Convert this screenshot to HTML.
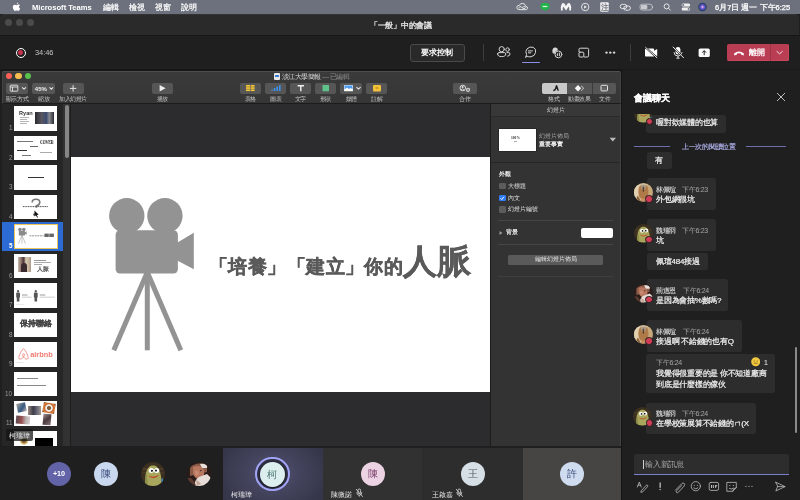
<!DOCTYPE html>
<html><head><meta charset="utf-8">
<style>
*{margin:0;padding:0;box-sizing:border-box}
html,body{width:800px;height:500px;overflow:hidden;background:#1f1f1f;font-family:"Liberation Sans",sans-serif;color:#fff}
body{-webkit-font-smoothing:antialiased}
.t{will-change:transform}
.a{position:absolute}
.t{position:absolute;white-space:nowrap;line-height:1}
.av{border-radius:50%;display:flex;align-items:center;justify-content:center;line-height:1;will-change:transform}
.kb{top:83px;height:10.5px;background:#565656;border-radius:2px}
.kl{position:absolute;top:97px;font-size:5.6px;letter-spacing:-0.45px;line-height:1;color:#c2c2c2;white-space:nowrap;transform:translateX(-50%)}
</style></head><body>
<svg width="0" height="0" style="position:absolute">
<defs>
<clipPath id="cc"><circle cx="12" cy="12" r="12"/></clipPath>
<symbol id="frog" viewBox="0 0 24 24"><g clip-path="url(#cc)">
<rect width="24" height="24" fill="#3b3020"/>
<path d="M2 6 L22 6 L22 8 L2 8Z M2 10 L22 10 L22 11 L2 11Z" fill="#4a3c28"/>
<path d="M4.5 24 C3.5 17 4.5 8 8 5 C10 3.2 14 3 16 5 C19.5 8 21 17 20.5 24Z" fill="#a8a65c"/>
<path d="M4.5 24 C4 19 4.6 14 5.5 12 L7 24Z" fill="#8c8c48"/>
<ellipse cx="10.3" cy="8.6" rx="2.6" ry="2.5" fill="#fff"/>
<ellipse cx="15.6" cy="8.4" rx="2.6" ry="2.5" fill="#fff"/>
<circle cx="10.9" cy="8.8" r="1.1" fill="#222"/>
<circle cx="15" cy="8.6" r="1.1" fill="#222"/>
<path d="M7.2 13.4 Q12.5 16.6 17.8 12.8 Q17.2 15.2 12.4 16 Q8.4 15.6 7.2 13.4Z" fill="#c23a22"/>
<path d="M20 18 L22 16 L22 22Z" fill="#3a8ac8"/>
</g></symbol>
<symbol id="man" viewBox="0 0 24 24"><g clip-path="url(#cc)">
<rect width="24" height="24" fill="#2a1c18"/>
<path d="M3 6 C6 1 16 0 20 4 L20 10 L3 14Z" fill="#8a5a48"/>
<path d="M13 2 C17 1 21 3 20 6 L15 6Z" fill="#e8e0dc"/>
<path d="M6 5 C10 3 16 4 17 9 C18 14 15 17 12 17 C8 17 6 13 6 9Z" fill="#b87860"/>
<path d="M8 9 C10 8 12 9 12 11 C12 13 10 14 8 13Z" fill="#c88a70"/>
<circle cx="13.8" cy="8.6" r="0.8" fill="#3a2a2a"/>
<path d="M12 15 L20 12 L24 16 L24 24 L8 24 C7 20 9 17 12 15Z" fill="#e6dcd8"/>
<path d="M4 16 C6 18 8 20 9 24 L0 24 L0 16Z" fill="#5a3a30"/>
<path d="M9 18 C11 19 13 20 14 22 L10 24Z" fill="#c8a898"/>
</g></symbol>
<symbol id="dog" viewBox="0 0 24 24"><g clip-path="url(#cc)">
<rect width="24" height="24" fill="#d2bc98"/>
<path d="M0 6 C2 3 5 2 8 3 L6 24 H0Z" fill="#e0d0b0"/>
<path d="M24 6 C22 3 19 2 16 3 L18 24 H24Z" fill="#c8a878"/>
<path d="M7 4 C9 2 15 2 17 4 C19 8 19 14 17 18 C15 22 9 22 7 18 C5 14 5 8 7 4Z" fill="#b07a48"/>
<path d="M8.5 3 C10 2 14 2 15.5 3 L14.5 8 H9.5Z" fill="#a89a88"/>
<path d="M11 5 C11.6 4.6 12.4 4.6 13 5 L12.8 11 C12.5 11.8 11.5 11.8 11.2 11Z" fill="#5a4030"/>
<path d="M5 16 C7 20 9 24 9 24 H4 C3 20 3 18 5 16Z" fill="#8a6038"/>
<path d="M19 16 C17 20 15 24 15 24 H20 C21 20 21 18 19 16Z" fill="#9a7040"/>
<path d="M9 18 C10 21 14 21 15 18 L15 24 H9Z" fill="#c89060"/>
</g></symbol>
<symbol id="man2" viewBox="0 0 24 24"><g clip-path="url(#cc)">
<rect width="24" height="24" fill="#3a2018"/>
<path d="M2 4 C6 0 18 0 22 6 L22 12 C18 10 8 10 2 14Z" fill="#7a4a30"/>
<path d="M6 6 C10 4 16 5 17 10 C18 15 15 18 12 18 C8 18 6 14 6 10Z" fill="#c08a68"/>
<path d="M10 15 L22 14 L24 24 L6 24Z" fill="#e8dcd0"/>
<path d="M0 14 C4 16 6 20 6 24 H0Z" fill="#5a3020"/>
</g></symbol>
</defs></svg>
<!-- menu bar -->
<div class="a" style="left:0;top:0;width:800px;height:14px;background:#6c717d"></div>
<div class="t" style="left:32px;top:4.0px;font-size:7.6px;font-weight:bold">Microsoft Teams</div>
<div class="t" style="left:103px;top:3.8px;font-size:7.5px;letter-spacing:-0.3px;-webkit-text-stroke:0.2px #fff">編輯</div>
<div class="t" style="left:129px;top:3.8px;font-size:7.5px;letter-spacing:-0.3px;-webkit-text-stroke:0.2px #fff">檢視</div>
<div class="t" style="left:155px;top:3.8px;font-size:7.5px;letter-spacing:-0.3px;-webkit-text-stroke:0.2px #fff">視窗</div>
<div class="t" style="left:181px;top:3.8px;font-size:7.5px;letter-spacing:-0.3px;-webkit-text-stroke:0.2px #fff">說明</div>
<div class="t" style="left:715px;top:3.8px;font-size:7.5px;-webkit-text-stroke:0.25px #fff">6月7日 週一 下午6:25</div>

<svg class="a" style="left:0;top:0" width="800" height="14" viewBox="0 0 800 14">
 <g transform="translate(2.4 0)"><path d="M16.6 4.6 C15.4 4.6 15 5.2 14.3 5.2 C13.6 5.2 13 4.6 12.2 4.7 C11.2 4.8 10.4 5.7 10.4 7.1 C10.4 8.9 11.6 10.9 12.5 10.9 C13.1 10.9 13.4 10.5 14.2 10.5 C15 10.5 15.2 10.9 15.9 10.9 C16.7 10.9 17.5 9.5 17.8 8.6 C16.9 8.2 16.5 7.4 16.6 6.6 C16.7 5.9 17.1 5.4 17.6 5.2 C17.3 4.8 17 4.6 16.6 4.6Z M15.8 2.4 C15.9 3.1 15.4 4.1 14.3 4.2 C14.2 3.4 14.9 2.5 15.8 2.4Z" fill="#fff"/></g>
 <g stroke="#f0f0f0" stroke-width="0.9" fill="none">
  <path d="M519 9.6 Q516.6 9.4 516.8 7.2 Q517.2 5 519.4 5.4 Q520.2 3 522.8 3.4 Q525.4 3.8 525.6 6.2 Q527.8 6.6 527.6 8.2 Q527.2 9.8 525.6 9.7 Z"/>
  <path d="M519.6 8.4 Q518.4 7.2 519.8 6.6 Q521 6.4 522.6 8 Q524 9.2 525 8.4 Q525.8 7.4 524.6 6.6 Q523.4 6.2 522.4 7.6"/>
  <circle cx="585.2" cy="7" r="3.7"/>
  <rect x="620.2" y="4.4" width="6.6" height="4.2" rx="2.1"/><rect x="623.8" y="6" width="6.6" height="4.2" rx="2.1"/>
  <rect x="640" y="4.2" width="12.2" height="5.8" rx="2.2" stroke="#d8d8d8" stroke-width="0.7"/>
  <circle cx="666.6" cy="6.4" r="2.5"/>
  <path d="M668.4 8.2 L670.6 10.4"/>
 </g>
 <path d="M540.4 6.5 Q540.4 2.8 545 2.8 Q549.6 2.8 549.6 6.5 Q549.6 9.2 546.2 10 L545.2 11.4 L544.6 10.1 Q540.4 9.6 540.4 6.5Z" fill="#21b24b"/>
 <rect x="542.6" y="5.9" width="4.8" height="1.2" fill="#d8f5dd"/>
 <path d="M561 10.4 Q560.2 6.8 561.6 4.2 Q562.8 2.4 564.4 3.6 L566 6 L567.6 3.6 Q569.2 2.4 570.4 4.2 Q571.8 6.8 571 10.4 L569.2 10.6 Q569.6 8 568.8 6.6 L566 10.4 L563.2 6.6 Q562.4 8 562.8 10.6Z" fill="#f4f4f4"/>
 <path d="M584.2 5.2 L586.8 7 L584.2 8.8Z" fill="#f0f0f0"/>
 <rect x="600.2" y="2.2" width="8.6" height="9.6" rx="1.2" fill="#f2f2f2"/>
 <text x="600.9" y="10.3" font-size="7.6" fill="#6c717d" font-weight="bold">注</text>
 <rect x="640.9" y="5" width="6.4" height="4.2" rx="1.2" fill="#c8cacf"/>
 <path d="M652.6 6.2 V8" stroke="#d8d8d8" stroke-width="0.7"/>
 <g fill="#f0f0f0">
  <rect x="681.6" y="3.4" width="8.6" height="3" rx="1.5"/>
  <rect x="681.6" y="7.6" width="8.6" height="3" rx="1.5"/>
 </g>
 <circle cx="683.2" cy="4.9" r="1" fill="#6c717d"/><circle cx="688.6" cy="9.1" r="1" fill="#6c717d"/>
 <defs><radialGradient id="siri" cx="50%" cy="50%" r="50%"><stop offset="0" stop-color="#e8f0ff"/><stop offset="0.3" stop-color="#a060c8"/><stop offset="0.65" stop-color="#3a58b8"/><stop offset="1" stop-color="#2a2a48"/></radialGradient></defs>
 <circle cx="702.5" cy="7" r="4.2" fill="url(#siri)"/>
</svg>
<!-- teams title bar -->
<div class="a" style="left:0;top:14.4px;width:799.4px;height:20.6px;background:#2a2a2a;border-radius:5px 5px 0 0;box-shadow:inset 0 0.6px 0 #3c3c3c"></div>
<div class="a" style="left:4.5px;top:18.5px;width:7px;height:7px;border-radius:50%;background:#4b4b4b"></div>
<div class="a" style="left:15.7px;top:18.5px;width:7px;height:7px;border-radius:50%;background:#4b4b4b"></div>
<div class="a" style="left:26.9px;top:18.5px;width:7px;height:7px;border-radius:50%;background:#4b4b4b"></div>
<div class="t" style="left:369.8px;top:21.8px;font-size:7.5px;letter-spacing:-0.3px;color:#f0f0f0;-webkit-text-stroke:0.25px #f0f0f0">「一般」中的會議</div>

<!-- toolbar -->
<div class="a" style="left:0;top:35px;width:800px;height:35px;background:#1f1f1f;border-top:1px solid #161616"></div>
<div class="a" style="left:15.5px;top:47.5px;width:10px;height:10px;border-radius:50%;border:1.3px solid #fff;background:#1f1f1f"></div>
<div class="a" style="left:17.8px;top:49.8px;width:5.4px;height:5.4px;border-radius:50%;background:#c4314b"></div>
<div class="t" style="left:35px;top:48.5px;font-size:7.5px;color:#c4c4c4;letter-spacing:-0.1px">34:46</div>

<div class="a" style="left:410px;top:43.5px;width:55px;height:18px;border:1px solid #4a4a4a;border-radius:3px;background:#292929"></div>
<div class="t" style="left:421px;top:48.5px;font-size:8px;color:#fff;font-weight:bold">要求控制</div>
<div class="a" style="left:483px;top:44px;width:1px;height:17px;background:#3d3d3d"></div>
<div class="a" style="left:630px;top:44px;width:1px;height:17px;background:#3d3d3d"></div>
<div class="a" style="left:521.5px;top:61.5px;width:18px;height:1.5px;background:#8b8fe6;border-radius:1px"></div>

<!-- leave button -->
<div class="a" style="left:727px;top:43.8px;width:62px;height:17px;background:#b93d53;border-radius:2px;box-shadow:inset -0.8px -0.8px 0 #cf4a62"></div>
<div class="a" style="left:770px;top:43.8px;width:0.8px;height:17px;background:#9e3447"></div>
<div class="t" style="left:749px;top:48.5px;font-size:8px;font-weight:bold">離開</div>


<!-- keynote window -->
<div class="a" style="left:2px;top:70.5px;width:619px;height:376px;background:#2c2c2e;border-radius:2px 2px 0 0"></div>
<div class="a" style="left:0;top:69px;width:621px;height:1.6px;background:#171717"></div>
<div class="a" style="left:621px;top:69.4px;width:179px;height:1px;background:#1a1a1a"></div>
<div class="a" style="left:2px;top:70.5px;width:619px;height:33px;background:linear-gradient(#3a3a3a,#363636);border-top:1px solid #4e4e4e;border-left:0.8px solid #444;border-right:1px solid #444;border-bottom:1px solid #1c1c1c;border-radius:2px 2px 0 0"></div>
<div class="a" style="left:5.6px;top:73.1px;width:6.4px;height:6.4px;border-radius:50%;background:#fe5f57"></div>
<div class="a" style="left:15.2px;top:73.1px;width:6.4px;height:6.4px;border-radius:50%;background:#f5bd4f"></div>
<div class="a" style="left:25px;top:73.1px;width:6.4px;height:6.4px;border-radius:50%;background:#5ac24c"></div>
<!-- doc title -->
<div class="a" style="left:274px;top:72.5px;width:5.5px;height:7.5px;background:#e8e8e8;border-radius:1px"></div>
<div class="a" style="left:275px;top:74.5px;width:3.5px;height:2.5px;background:#3a7bd5"></div>
<div class="t" style="left:282px;top:72.6px;font-size:7px;letter-spacing:-0.55px;color:#d4d4d4">淡江大學簡報<span style="color:#8a8a8a"> — 已編輯</span></div>
<!-- toolbar buttons -->
<div class="a kb" style="left:6px;width:22px"></div>
<div class="a kb" style="left:32px;width:23.3px"></div>
<div class="a kb" style="left:62.5px;width:21.3px"></div>
<div class="a kb" style="left:151.6px;width:21.4px"></div>
<div class="a kb" style="left:239.6px;width:21.4px"></div>
<div class="a kb" style="left:265.2px;width:20.8px"></div>
<div class="a kb" style="left:290px;width:20.8px"></div>
<div class="a kb" style="left:315px;width:21px"></div>
<div class="a kb" style="left:340px;width:22.4px"></div>
<div class="a kb" style="left:366.4px;width:21px"></div>
<div class="a kb" style="left:452.6px;width:24.2px"></div>
<div class="a kb" style="left:542px;width:73.8px"></div>
<div class="a" style="left:542px;top:83px;width:25px;height:10.5px;background:#c9c9c9;border-radius:2px 0 0 2px"></div>
<div class="a" style="left:591.5px;top:83px;width:0.6px;height:10.5px;background:#3a3a3a"></div>

<!-- toolbar icons -->
<svg class="a" style="left:0;top:0" width="800" height="110" viewBox="0 0 800 110">
 <g fill="none" stroke="#e6e6e6" stroke-width="0.9">
  <rect x="10.2" y="85.2" width="7.6" height="6" rx="0.6"/>
  <line x1="10.2" y1="87" x2="17.8" y2="87"/>
  <line x1="12.5" y1="87" x2="12.5" y2="91.2"/>
  <polyline points="22.1,87.3 24,89.1 25.9,87.3" stroke-width="1.1"/>
  <polyline points="49.5,87.3 51.3,89.1 53.1,87.3" stroke-width="1.1"/>
  <line x1="73.1" y1="85.2" x2="73.1" y2="91.6" stroke-width="1"/>
  <line x1="69.9" y1="88.4" x2="76.3" y2="88.4" stroke-width="1"/>
  <polyline points="356.4,87.1 358.5,89.1 360.6,87.1" stroke-width="1.1"/>
  <circle cx="462.8" cy="88" r="2.8"/>
  <rect x="601" y="85.3" width="6.5" height="5.6" rx="0.8" stroke-width="1"/>
 </g>
 <text x="34.8" y="90.8" font-size="6" font-weight="bold" fill="#f0f0f0" font-family="Liberation Sans">45%</text>
 <polygon points="159.6,85 165.6,88.3 159.6,91.6" fill="#ededed"/>
 <g fill="#f2c436">
  <rect x="246" y="85" width="4" height="1.7"/><rect x="250.6" y="85" width="4" height="1.7"/>
  <rect x="246" y="87.2" width="4" height="1.7"/><rect x="250.6" y="87.2" width="4" height="1.7"/>
  <rect x="246" y="89.4" width="4" height="1.7"/><rect x="250.6" y="89.4" width="4" height="1.7"/>
 </g>
 <g fill="#3d93f5">
  <rect x="271.2" y="89.4" width="1.6" height="1.6" rx="0.8"/>
  <rect x="273.8" y="88" width="1.6" height="3" rx="0.6"/>
  <rect x="276.4" y="86.5" width="1.6" height="4.5" rx="0.6"/>
  <rect x="279" y="85" width="1.6" height="6" rx="0.6"/>
 </g>
 <path d="M297.6 85h6.4v1.4h-2.5v4.8h-1.4v-4.8h-2.5z" fill="#efefef"/>
 <rect x="322.5" y="85" width="6.5" height="6.3" rx="0.5" fill="#5ec28a"/>
 <rect x="344" y="85" width="9" height="6.2" rx="0.4" fill="#f4f4f4"/>
 <rect x="344.5" y="85.5" width="8" height="4" fill="#4a9af0"/>
 <path d="M344.5 89.5 L347 87.6 L349 89 L350.8 88 L352.5 89.5 V90.7 H344.5z" fill="#fff"/>
 <rect x="373" y="85" width="8" height="6.5" rx="1" fill="#f3c23a"/>
 <rect x="375.5" y="87" width="3" height="0.6" fill="#b58a10"/><rect x="375.5" y="88.3" width="3" height="0.6" fill="#b58a10"/>
 <circle cx="462.6" cy="87" r="1" fill="#e6e6e6"/>
 <path d="M460.8 89.9 q1.8 -2 3.6 0" stroke="#e6e6e6" stroke-width="0.8" fill="none"/>
 <circle cx="468" cy="89.8" r="2.5" fill="#565656"/><circle cx="468" cy="89.8" r="2.1" fill="#e6e6e6"/>
 <path d="M466.7 89.8h2.6M468 88.5v2.6" stroke="#565656" stroke-width="0.75"/>
 <path d="M553 91.6 Q553.2 89.2 555 88.4 L555.8 85.6 Q556.5 84.6 557.2 85.6 L558.9 90.4 L557.9 91 L556.5 88.6 Q556 90.9 553 91.6Z" fill="#1a1a1a"/>
 <path d="M574.8 88.3 L578 85.1 L581.2 88.3 L578 91.5z" fill="#f5f5f5"/>
 <path d="M581.5 85.6 L584.2 88.3 L581.5 91 L580.9 90.4 L583 88.3 L580.9 86.2z" fill="#bdbdbd"/>
 <rect x="602" y="87.3" width="4.5" height="2.6" fill="#6a6a6a"/>
</svg>
<!-- labels -->
<div class="kl" style="left:17px">顯示方式</div>
<div class="kl" style="left:43.6px">縮放</div>
<div class="kl" style="left:73px">加入幻燈片</div>
<div class="kl" style="left:162.3px">播放</div>
<div class="kl" style="left:250.3px">表格</div>
<div class="kl" style="left:275.6px">圖表</div>
<div class="kl" style="left:300.4px">文字</div>
<div class="kl" style="left:325.5px">形狀</div>
<div class="kl" style="left:351.2px">媒體</div>
<div class="kl" style="left:376.9px">註解</div>
<div class="kl" style="left:464.7px">合作</div>
<div class="kl" style="left:554px">格式</div>
<div class="kl" style="left:579.4px">動畫效果</div>
<div class="kl" style="left:604.6px">文件</div>

<!-- sidebar -->
<div class="a" style="left:2px;top:103.5px;width:60.5px;height:342.5px;background:#262626"></div>
<div class="a" style="left:62.5px;top:103.5px;width:8px;height:342.5px;background:#323232;border-right:1px solid #1e1e1e"></div>
<div class="a" style="left:64.8px;top:105px;width:4.2px;height:52.5px;background:#858585;border-radius:2px"></div>
<div class="a" style="left:2px;top:221.6px;width:60.5px;height:29px;background:#2d6bd4"></div>

<!-- thumbs -->
<div class="a" style="left:14px;top:106.0px;width:43.2px;height:24.5px;background:#fff"></div>
<div class="t" style="right:787.7px;top:125.0px;font-size:6.4px;color:#9a9a9a;font-weight:normal">1</div>
<div class="a" style="left:14px;top:135.5px;width:43.2px;height:24.5px;background:#fff"></div>
<div class="t" style="right:787.7px;top:154.5px;font-size:6.4px;color:#9a9a9a;font-weight:normal">2</div>
<div class="a" style="left:14px;top:165.0px;width:43.2px;height:24.5px;background:#fff"></div>
<div class="t" style="right:787.7px;top:184.0px;font-size:6.4px;color:#9a9a9a;font-weight:normal">3</div>
<div class="a" style="left:14px;top:194.5px;width:43.2px;height:24.5px;background:#fff"></div>
<div class="t" style="right:787.7px;top:213.5px;font-size:6.4px;color:#9a9a9a;font-weight:normal">4</div>
<div class="a" style="left:14px;top:224.0px;width:43.2px;height:24.5px;background:#fff"></div>
<div class="t" style="right:787.7px;top:243.0px;font-size:6.4px;color:#fff;font-weight:bold">5</div>
<div class="a" style="left:14px;top:253.5px;width:43.2px;height:24.5px;background:#fff"></div>
<div class="t" style="right:787.7px;top:272.5px;font-size:6.4px;color:#9a9a9a;font-weight:normal">6</div>
<div class="a" style="left:14px;top:283.0px;width:43.2px;height:24.5px;background:#fff"></div>
<div class="t" style="right:787.7px;top:302.0px;font-size:6.4px;color:#9a9a9a;font-weight:normal">7</div>
<div class="a" style="left:14px;top:312.5px;width:43.2px;height:24.5px;background:#fff"></div>
<div class="t" style="right:787.7px;top:331.5px;font-size:6.4px;color:#9a9a9a;font-weight:normal">8</div>
<div class="a" style="left:14px;top:342.0px;width:43.2px;height:24.5px;background:#fff"></div>
<div class="t" style="right:787.7px;top:361.0px;font-size:6.4px;color:#9a9a9a;font-weight:normal">9</div>
<div class="a" style="left:14px;top:371.5px;width:43.2px;height:24.5px;background:#fff"></div>
<div class="t" style="right:787.7px;top:390.5px;font-size:6.4px;color:#9a9a9a;font-weight:normal">10</div>
<div class="a" style="left:14px;top:401.0px;width:43.2px;height:24.5px;background:#fff"></div>
<div class="t" style="right:787.7px;top:420.0px;font-size:6.4px;color:#9a9a9a;font-weight:normal">11</div>
<div class="a" style="left:14px;top:430.5px;width:43.2px;height:24.5px;background:#fff"></div>
<div class="t" style="right:787.7px;top:449.5px;font-size:6.4px;color:#9a9a9a;font-weight:normal">12</div>
<div class="a" style="left:13.6px;top:223.7px;width:44px;height:25.1px;border:0.8px solid #e9c65a"></div>
<div class="t" style="left:19px;top:110.6px;font-size:5.6px;font-weight:bold;color:#333">Ryan</div>
<div class="a" style="left:19.8px;top:116.8px;width:9.5px;height:0.7px;background:#b5b5b5"></div>
<div class="a" style="left:19.8px;top:118.7px;width:7.5px;height:0.7px;background:#b5b5b5"></div>
<div class="a" style="left:19.8px;top:120.6px;width:9.5px;height:0.7px;background:#b5b5b5"></div>
<div class="a" style="left:19.8px;top:122.5px;width:7.5px;height:0.7px;background:#b5b5b5"></div>
<div class="a" style="left:35px;top:112.2px;width:18.8px;height:12.2px;background:linear-gradient(90deg,#2a2a30,#5a5660 35%,#3c4c70 60%,#8a8a90 75%,#2a2a34)"></div>
<div class="a" style="left:16.5px;top:140.5px;width:16px;height:1.1px;background:#777"></div>
<div class="t" style="left:40px;top:140.9px;font-size:4.8px;font-weight:bold;color:#111;font-family:'Liberation Serif',serif;transform:scale(0.78,1.05);transform-origin:0 0">COVER</div>
<div class="a" style="left:30px;top:146.3px;width:7.5px;height:1px;background:#666"></div>
<div class="a" style="left:16.8px;top:149.7px;width:10px;height:1.3px;background:#333"></div>
<div class="a" style="left:40px;top:152.0px;width:12px;height:1px;background:#aaa"></div>
<div class="a" style="left:22px;top:155.0px;width:9px;height:1px;background:#777"></div>
<div class="a" style="left:27.6px;top:176.8px;width:16px;height:1px;background:#333"></div>
<svg class="a" style="left:14px;top:194.5px" width="43.2" height="24.5" viewBox="0 0 43.2 24.5"><path d="M18.2 7.4 q0 -3.2 3.8 -3.2 q3.8 0 3.8 3 q0 2.6 -3.4 3.6 v2" stroke="#777" stroke-width="1.6" fill="none"/><line x1="8.8" y1="11.6" x2="34" y2="11.6" stroke="#555" stroke-width="1" stroke-dasharray="1.2 0.5"/><circle cx="20.5" cy="19.6" r="1.3" fill="#666"/><path d="M20.5 15.5 l0 6 l1.4 -1.3 l1.3 2.5 l0.8 -0.4 l-1.2 -2.4 l1.9 -0.2z" fill="#111"/></svg>
<svg class="a" style="left:14px;top:224.0px" width="43.2" height="24.5" viewBox="0 0 43.2 24.5"><g fill="#8a8a8a"><circle cx="6" cy="5.6" r="1.8"/><circle cx="9.8" cy="5.6" r="1.8"/><rect x="4.8" y="7" width="6.2" height="4.4" rx="0.5"/><polygon points="11,8.2 12.6,7.2 12.6,10.8 11,9.9"/></g><g stroke="#8a8a8a" stroke-width="0.5"><line x1="8" y1="11.3" x2="4.4" y2="19.6"/><line x1="8" y1="11.3" x2="8" y2="19.6"/><line x1="8" y1="11.3" x2="11.5" y2="19.6"/></g><line x1="15.5" y1="11.8" x2="29.6" y2="11.8" stroke="#888" stroke-width="0.9" stroke-dasharray="2 0.6"/><rect x="30.4" y="9.6" width="4.4" height="3.4" fill="#666"/><rect x="35.3" y="9.6" width="4.6" height="3.4" fill="#666"/></svg>
<div class="a" style="left:18.2px;top:256.7px;width:12.6px;height:15px;background:linear-gradient(90deg,#c8bcae 0%,#8a7068 25%,#4a3438 45%,#d8c8b0 60%,#c8b8a0 80%,#a89888 100%)"></div>
<div class="a" style="left:21px;top:262.5px;width:6px;height:9px;background:#3a2a30;border-radius:3px 3px 0 0"></div>
<div class="a" style="left:34px;top:259.7px;width:12px;height:0.7px;background:#999"></div>
<div class="a" style="left:34px;top:261.9px;width:17px;height:0.7px;background:#aaa"></div>
<div class="a" style="left:34px;top:263.9px;width:7.5px;height:0.7px;background:#aaa"></div>
<div class="t" style="left:37px;top:265.7px;font-size:6px;letter-spacing:-0.4px;font-weight:bold;color:#444">人脈</div>
<svg class="a" style="left:14px;top:283.0px" width="43.2" height="24.5" viewBox="0 0 43.2 24.5"><g fill="#555"><g transform="translate(0 0)"><circle cx="4.1" cy="8.2" r="1.1"/><path d="M2.2 10.2 Q2.2 9.4 3 9.4 H5.2 Q6 9.4 6 10.2 V14.6 H5.4 V18.6 H2.8 V14.6 H2.2Z"/></g><g transform="translate(17.7 0)"><circle cx="4.1" cy="8.2" r="1.1"/><path d="M2.2 10.2 Q2.2 9.4 3 9.4 H5.2 Q6 9.4 6 10.2 V14.6 H5.4 V18.6 H2.8 V14.6 H2.2Z"/></g></g><g fill="#aaa"><rect x="8" y="11" width="5.5" height="0.6"/><rect x="8" y="12.4" width="5.5" height="0.6"/><rect x="8" y="13.8" width="9.5" height="0.6"/><rect x="25.8" y="11" width="5.5" height="0.6"/><rect x="25.8" y="12.4" width="5.5" height="0.6"/><rect x="25.8" y="13.8" width="15" height="0.6"/></g><rect x="2" y="21" width="8.5" height="0.8" fill="#e6e6e6"/></svg>
<div class="t" style="left:19.6px;top:320.3px;font-size:7.8px;font-weight:bold;color:#444;-webkit-text-stroke:0.2px #444">保持聯絡</div>
<svg class="a" style="left:14px;top:342.0px" width="43.2" height="24.5" viewBox="0 0 43.2 24.5"><path d="M9.5 6.8 C8 6.8 4.8 14 4.8 15.5 C4.8 17.5 7 18 9.5 15 C12 18 14.2 17.5 14.2 15.5 C14.2 14 11 6.8 9.5 6.8 Z M9.5 15 C8.2 13.2 8.2 11.8 9.5 11.8 C10.8 11.8 10.8 13.2 9.5 15Z" fill="none" stroke="#f07a70" stroke-width="0.8"/><text x="16.2" y="15.3" font-size="7.4" font-weight="bold" fill="#f07a70" font-family="Liberation Sans">airbnb</text><rect x="2.5" y="20" width="7" height="0.9" fill="#e4e4e4"/></svg>
<div class="a" style="left:17px;top:378.1px;width:20.5px;height:1px;background:#888"></div>
<div class="a" style="left:17px;top:384.5px;width:29px;height:1px;background:#888"></div>
<div class="a" style="left:16.5px;top:403.0px;width:9px;height:9px;background:linear-gradient(135deg,#b0a8a0,#4a6a88 45%,#3a5a80 60%,#c8c0b8);transform:rotate(-12deg)"></div>
<div class="a" style="left:28px;top:406.0px;width:13px;height:8.5px;background:linear-gradient(90deg,#9a8a80,#3a3a48 40%,#6a6a78 70%,#a89a90)"></div>
<div class="a" style="left:43px;top:403.0px;width:12px;height:10px;background:radial-gradient(circle,#7a6040 0 22%,#f4eee8 30% 42%,#c86a30 55%,#d88040 75%,#5a3a20);transform:rotate(10deg)"></div>
<div class="a" style="left:16px;top:415.5px;width:13.5px;height:7.5px;background:linear-gradient(90deg,#5a4a50,#9a5050 40%,#b8b0b0 70%,#d8d0d0);transform:rotate(4deg)"></div>
<div class="a" style="left:43px;top:413.5px;width:8px;height:11px;background:linear-gradient(135deg,#a09090,#4a3a40 50%,#8a7a78);transform:rotate(5deg)"></div>
<div class="a" style="left:20px;top:438.5px;width:8px;height:7px;background:radial-gradient(circle at 50% 20%,#6a5030 20%,#c8a050 45%,#fff 70%)"></div>
<div class="a" style="left:35px;top:437.8px;width:18px;height:8px;background:#000"></div>
<div class="a" style="left:6.2px;top:428.8px;width:27px;height:12.5px;background:rgba(20,20,20,0.72);border-radius:2px"></div>
<div class="t" style="left:9px;top:431.5px;font-size:7.4px;color:#e8e8e8">柯瑞瑋</div>
<!-- canvas -->
<div class="a" style="left:70.7px;top:156.7px;width:419.5px;height:235.7px;background:#fff"></div>


<!-- slide content -->
<svg class="a" style="left:70.7px;top:156.7px" width="420" height="236" viewBox="70.7 156.7 420 236">
 <g fill="#939393">
  <circle cx="126.5" cy="215.5" r="17.7"/>
  <circle cx="164.6" cy="215.5" r="17.7"/>
  <rect x="115.3" y="230" width="62.3" height="43.3" rx="4.5"/>
  <polygon points="176,243 193.5,232.5 193.5,269 176,259.7"/>
 </g>
 <g stroke="#939393" stroke-width="5" fill="none">
  <line x1="147" y1="272" x2="113.5" y2="350"/>
  <line x1="147" y1="272" x2="147" y2="350"/>
  <line x1="147" y1="272" x2="180.5" y2="350"/>
 </g>
</svg>
<div class="t" style="left:209px;top:244px;font-size:19.2px;letter-spacing:0.42px;font-weight:900;color:#5a5a5a;-webkit-text-stroke:0.4px #5a5a5a">「培養」「建立」你的<span style="font-size:34px;letter-spacing:0">人脈</span></div>
<!-- inspector -->
<div class="a" style="left:490.3px;top:103.5px;width:130.7px;height:342.5px;background:#333;border-left:1px solid #1c1c1c;border-right:1px solid #444"></div>
<div class="a" style="left:491.3px;top:103.5px;width:129px;height:13.5px;background:#383838;border-bottom:1px solid #2a2a2a"></div>
<div class="t" style="left:546.5px;top:107.2px;font-size:6px;color:#cfcfcf">幻燈片</div>



<!-- inspector content -->
<div class="a" style="left:491.3px;top:161.5px;width:129px;height:1px;background:#262626"></div>
<div class="a" style="left:498.8px;top:128.7px;width:37.6px;height:22px;background:#fff;box-shadow:0 0 0 0.6px #222"></div>
<div class="t" style="left:510.6px;top:136.6px;font-size:3.6px;font-weight:bold;color:#333;font-family:'Liberation Serif',serif">100%</div>
<div class="a" style="left:514px;top:141.2px;width:3px;height:0.5px;background:#aaa"></div>
<div class="t" style="left:539.3px;top:132.7px;font-size:6.2px;color:#a5a5a5">幻燈片佈局</div>
<div class="t" style="left:539.3px;top:141.3px;font-size:6.2px;color:#f0f0f0;font-weight:bold">重要事實</div>
<svg class="a" style="left:609px;top:137px" width="8" height="5" viewBox="0 0 8 5"><polygon points="0.6,0.8 7,0.8 3.8,4.4" fill="#bdbdbd"/></svg>
<div class="t" style="left:498.7px;top:171.0px;font-size:6.2px;color:#e8e8e8;font-weight:bold">外觀</div>
<div class="a" style="left:499.2px;top:182.8px;width:6.4px;height:6.4px;background:#5c5c5c;border-radius:1.3px"></div>
<div class="t" style="left:508px;top:182.8px;font-size:6.2px;color:#e0e0e0">大標題</div>
<div class="a" style="left:499.2px;top:194.8px;width:6.4px;height:6.4px;background:#2f7cf6;border-radius:1.3px"></div>
<svg class="a" style="left:499.2px;top:194.8px" width="6.4" height="6.4" viewBox="0 0 6.4 6.4"><polyline points="1.4,3.3 2.7,4.6 5,1.8" stroke="#fff" stroke-width="0.9" fill="none"/></svg>
<div class="t" style="left:508px;top:194.8px;font-size:6.2px;color:#e0e0e0">內文</div>
<div class="a" style="left:499.2px;top:206.2px;width:6.4px;height:6.4px;background:#5c5c5c;border-radius:1.3px"></div>
<div class="t" style="left:508px;top:206.2px;font-size:6.2px;color:#e0e0e0">幻燈片編號</div>
<div class="a" style="left:498px;top:220px;width:115px;height:0.8px;background:#454545"></div>
<svg class="a" style="left:498px;top:229.5px" width="6" height="6" viewBox="0 0 6 6"><polygon points="1.5,1 4.5,3 1.5,5" fill="#9a9a9a"/></svg>
<div class="t" style="left:506.4px;top:229.2px;font-size:6.2px;color:#e8e8e8;font-weight:bold">背景</div>
<div class="a" style="left:581.3px;top:227.8px;width:31.7px;height:9.9px;background:#fff;border-radius:2px"></div>
<div class="a" style="left:498px;top:243.6px;width:115px;height:0.8px;background:#454545"></div>
<div class="a" style="left:508px;top:255.4px;width:95.4px;height:9.2px;background:#5a5a5a;border-radius:1.5px"></div>
<div class="t" style="left:534.5px;top:257.3px;font-size:5.8px;color:#e0e0e0">編輯幻燈片佈局</div>
<div class="a" style="left:498px;top:275.6px;width:115px;height:0.8px;background:#3f3f3f"></div>
<!-- participants bar -->
<div class="a" style="left:0;top:446px;width:621px;height:54px;background:#1f1f1f"></div>
<div class="a" style="left:222.8px;top:448px;width:99.8px;height:52px;background:radial-gradient(ellipse 55px 42px at 50% 48%,#54547a 0%,#44445e 45%,#36364a 100%)"></div>
<div class="a" style="left:322.6px;top:448px;width:99.8px;height:52px;background:#313131"></div>
<div class="a" style="left:422.4px;top:448px;width:100.4px;height:52px;background:#2d2d2d"></div>
<div class="a" style="left:522.8px;top:448px;width:98.5px;height:52px;background:#474543"></div>
<div class="a av" style="left:47.3px;top:462.3px;width:24px;height:24px;background:#6264a7;font-size:7.2px;color:#fff;font-weight:bold">+10</div>
<div class="a av" style="left:93.8px;top:462px;width:24px;height:24px;background:#c9d8ef;font-size:9.5px;color:#3a4a78">陳</div>
<svg class="a" style="left:140.5px;top:462.3px" width="24" height="24"><use href="#frog"/></svg>
<svg class="a" style="left:187.4px;top:462.3px" width="24" height="24"><use href="#man"/></svg>
<div class="a" style="left:255.3px;top:456.6px;width:34.6px;height:34.6px;border-radius:50%;border:2px solid #a2a4f6;background:radial-gradient(circle,#2c2c40 60%,#3a3a52 100%)"></div>
<div class="a av" style="left:260.2px;top:461.5px;width:24.8px;height:24.8px;background:#dcefee;font-size:9.5px;color:#4a7472;box-shadow:0 1px 2px rgba(0,0,0,0.5)">柯</div>
<div class="a av" style="left:360.5px;top:461.6px;width:24px;height:24px;background:#ecd3e4;font-size:9.5px;color:#7a3f6a">陳</div>
<div class="a av" style="left:460.7px;top:461.6px;width:24px;height:24px;background:#d6dfe6;font-size:9.5px;color:#4c5a62">王</div>
<div class="a av" style="left:560.3px;top:461.6px;width:24px;height:24px;background:#cfdcf0;font-size:9.5px;color:#3a4a78">許</div>
<div class="t" style="left:230.7px;top:490.5px;font-size:7px;color:#e6e6e6">柯瑞瑋</div>
<div class="t" style="left:330.5px;top:490.5px;font-size:7px;color:#e6e6e6">陳微諾</div>
<div class="t" style="left:431.5px;top:490.5px;font-size:7px;color:#e6e6e6">王啟嘉</div>
<svg class="a" style="left:355px;top:488px" width="9" height="10" viewBox="0 0 9 10"><g stroke="#e0e0e0" stroke-width="0.8" fill="none"><rect x="3" y="1" width="2.6" height="4.6" rx="1.3"/><path d="M1.8 4.2 q0 3 2.5 3 q2.5 0 2.5 -3"/><line x1="4.3" y1="7.2" x2="4.3" y2="8.6"/><line x1="1" y1="1" x2="7.8" y2="8.8"/></g></svg>
<svg class="a" style="left:455px;top:488px" width="9" height="10" viewBox="0 0 9 10"><g stroke="#e0e0e0" stroke-width="0.8" fill="none"><rect x="3" y="1" width="2.6" height="4.6" rx="1.3"/><path d="M1.8 4.2 q0 3 2.5 3 q2.5 0 2.5 -3"/><line x1="4.3" y1="7.2" x2="4.3" y2="8.6"/><line x1="1" y1="1" x2="7.8" y2="8.8"/></g></svg>

<!-- chat panel -->
<div class="a" style="left:621px;top:70px;width:179px;height:430px;background:#1f1f1f;border-left:1px solid #141414"></div>
<div class="t" style="left:634px;top:94.3px;font-size:9px;color:#ffffff;font-weight:bold;-webkit-text-stroke:0.2px #fff">會議聊天</div>
<svg class="a" style="left:775.5px;top:92.3px" width="10" height="10" viewBox="0 0 10 10"><path d="M1 1L9 9M9 1L1 9" stroke="#d0d0d0" stroke-width="0.9"/></svg>
<div class="a" style="left:621px;top:114px;width:179px;height:330px;overflow:hidden">
<div class="a" style="left:-621px;top:-114px;width:800px;height:500px">
<div class="a" style="left:646.4px;top:114.85px;width:80.1px;height:18.0px;background:#2d2d2d;border-radius:2.5px"></div>
<svg class="a" style="left:633.6px;top:104.4px" width="18.8" height="18.8" viewBox="0 0 24 24"><use href="#frog"/></svg>
<div class="a" style="left:645.8px;top:117.8px;width:7.2px;height:7.2px;border-radius:50%;background:#d13b54;border:1.1px solid #1f1f1f"></div>
<div class="t" style="left:655.5px;top:118.9px;font-size:8px;letter-spacing:-0.25px;color:#f4f4f4;-webkit-text-stroke:0.2px #f4f4f4">喔對欸媒體的也算</div>
<div class="a" style="left:634px;top:145.8px;width:36px;height:1px;background:#6e6fa8"></div>
<div class="a" style="left:746px;top:145.8px;width:40px;height:1px;background:#6e6fa8"></div>
<div class="t" style="left:681.6px;top:143.4px;font-size:7px;letter-spacing:-0.3px;color:#b4b6f2;-webkit-text-stroke:0.15px #b4b6f2;">上一次的閱讀位置</div>
<div class="a" style="left:646.6px;top:151.6px;width:25.3px;height:17.4px;background:#2d2d2d;border-radius:2.5px"></div>
<div class="t" style="left:655.3px;top:156.9px;font-size:8px;letter-spacing:-0.25px;color:#f4f4f4;-webkit-text-stroke:0.2px #f4f4f4">有</div>
<div class="a" style="left:646.6px;top:177.8px;width:69.7px;height:31.9px;background:#2d2d2d;border-radius:2.5px"></div>
<svg class="a" style="left:633.8px;top:183.4px" width="18.8" height="18.8" viewBox="0 0 24 24"><use href="#dog"/></svg>
<div class="a" style="left:645.4px;top:195.4px;width:7.2px;height:7.2px;border-radius:50%;background:#d13b54;border:1.1px solid #1f1f1f"></div>
<div class="t" style="left:655.6px;top:185.7px;font-size:7px;letter-spacing:-0.3px;color:#d2d2d2;-webkit-text-stroke:0.15px #d2d2d2;">林佩瑄</div>
<div class="t" style="left:682.2px;top:185.7px;font-size:7px;letter-spacing:-0.3px;color:#a6a6a6;">下午6:23</div>
<div class="t" style="left:655.6px;top:196.4px;font-size:8px;letter-spacing:-0.25px;color:#f4f4f4;-webkit-text-stroke:0.2px #f4f4f4">外包網很坑</div>
<div class="a" style="left:646.6px;top:219.1px;width:69.7px;height:31.9px;background:#2d2d2d;border-radius:2.5px"></div>
<svg class="a" style="left:633.8px;top:224.3px" width="18.8" height="18.8" viewBox="0 0 24 24"><use href="#frog"/></svg>
<div class="a" style="left:645.4px;top:236.2px;width:7.2px;height:7.2px;border-radius:50%;background:#d13b54;border:1.1px solid #1f1f1f"></div>
<div class="t" style="left:655.6px;top:226.6px;font-size:7px;letter-spacing:-0.3px;color:#d2d2d2;-webkit-text-stroke:0.15px #d2d2d2;">魏瑞羽</div>
<div class="t" style="left:682.2px;top:226.6px;font-size:7px;letter-spacing:-0.3px;color:#a6a6a6;">下午6:23</div>
<div class="t" style="left:655.6px;top:236.9px;font-size:8px;letter-spacing:-0.25px;color:#f4f4f4;-webkit-text-stroke:0.2px #f4f4f4">坑</div>
<div class="a" style="left:646.6px;top:253px;width:61.3px;height:17.3px;background:#2d2d2d;border-radius:2.5px"></div>
<div class="t" style="left:655.6px;top:257.8px;font-size:8px;letter-spacing:-0.25px;color:#f4f4f4;-webkit-text-stroke:0.2px #f4f4f4">佩瑄484接過</div>
<div class="a" style="left:646.6px;top:279.1px;width:81.9px;height:31.9px;background:#2d2d2d;border-radius:2.5px"></div>
<svg class="a" style="left:633.8px;top:284.0px" width="18.8" height="18.8" viewBox="0 0 24 24"><use href="#man"/></svg>
<div class="a" style="left:645.4px;top:296.1px;width:7.2px;height:7.2px;border-radius:50%;background:#d13b54;border:1.1px solid #1f1f1f"></div>
<div class="t" style="left:655.6px;top:286.6px;font-size:7px;letter-spacing:-0.3px;color:#d2d2d2;-webkit-text-stroke:0.15px #d2d2d2;">荊道恩</div>
<div class="t" style="left:683px;top:286.6px;font-size:7px;letter-spacing:-0.3px;color:#a6a6a6;">下午6:24</div>
<div class="t" style="left:655.6px;top:296.8px;font-size:8px;letter-spacing:-0.25px;color:#f4f4f4;-webkit-text-stroke:0.2px #f4f4f4">是因為會抽%數嗎?</div>
<div class="a" style="left:646.6px;top:320.4px;width:95.6px;height:31.5px;background:#2d2d2d;border-radius:2.5px"></div>
<svg class="a" style="left:633.8px;top:325.2px" width="18.8" height="18.8" viewBox="0 0 24 24"><use href="#dog"/></svg>
<div class="a" style="left:645.4px;top:337.4px;width:7.2px;height:7.2px;border-radius:50%;background:#d13b54;border:1.1px solid #1f1f1f"></div>
<div class="t" style="left:655.6px;top:327.9px;font-size:7px;letter-spacing:-0.3px;color:#d2d2d2;-webkit-text-stroke:0.15px #d2d2d2;">林佩瑄</div>
<div class="t" style="left:683px;top:327.9px;font-size:7px;letter-spacing:-0.3px;color:#a6a6a6;">下午6:24</div>
<div class="t" style="left:655.6px;top:338.2px;font-size:8px;letter-spacing:-0.25px;color:#f4f4f4;-webkit-text-stroke:0.2px #f4f4f4">接過啊 不給錢的也有Q</div>
<div class="a" style="left:646.4px;top:353.75px;width:128.9px;height:39.4px;background:#2d2d2d;border-radius:2.5px"></div>
<div class="t" style="left:655.6px;top:359.0px;font-size:7px;letter-spacing:-0.3px;color:#a6a6a6;">下午6:24</div>
<svg class="a" style="left:751.1px;top:357.3px" width="9.4" height="9.4" viewBox="0 0 10 10"><circle cx="5" cy="5" r="4.8" fill="#f2c740"/><circle cx="3.4" cy="4.2" r="0.6" fill="#6a5010"/><circle cx="6.6" cy="4.2" r="0.6" fill="#6a5010"/><rect x="3" y="6.2" width="4" height="0.7" fill="#6a5010"/></svg>
<div class="t" style="left:763.6px;top:359.0px;font-size:7px;letter-spacing:-0.3px;color:#d2d2d2;-webkit-text-stroke:0.15px #d2d2d2;">1</div>
<div class="t" style="left:655.6px;top:369.5px;font-size:8px;letter-spacing:-0.25px;color:#f4f4f4;-webkit-text-stroke:0.2px #f4f4f4">我覺得很重要的是 你不知道廠商</div>
<div class="t" style="left:655.6px;top:380.9px;font-size:8px;letter-spacing:-0.25px;color:#f4f4f4;-webkit-text-stroke:0.2px #f4f4f4">到底是什麼樣的傢伙</div>
<div class="a" style="left:646.4px;top:403px;width:109.9px;height:31.3px;background:#2d2d2d;border-radius:2.5px"></div>
<svg class="a" style="left:633.1px;top:407.4px" width="18.8" height="18.8" viewBox="0 0 24 24"><use href="#frog"/></svg>
<div class="a" style="left:645.9px;top:419.4px;width:7.2px;height:7.2px;border-radius:50%;background:#d13b54;border:1.1px solid #1f1f1f"></div>
<div class="t" style="left:655.6px;top:409.8px;font-size:7px;letter-spacing:-0.3px;color:#d2d2d2;-webkit-text-stroke:0.15px #d2d2d2;">魏瑞羽</div>
<div class="t" style="left:682.3px;top:409.8px;font-size:7px;letter-spacing:-0.3px;color:#a6a6a6;">下午6:24</div>
<div class="t" style="left:655.6px;top:420.3px;font-size:8px;letter-spacing:-0.25px;color:#f4f4f4;-webkit-text-stroke:0.2px #f4f4f4">在學校策展算不給錢的ㄇ(X</div>
</div></div>
<div class="a" style="left:795.3px;top:347px;width:2px;height:85.5px;background:#8a8a8a;border-radius:1px"></div>
<div class="a" style="left:634.2px;top:454.2px;width:154.4px;height:21.2px;background:#2d2d2d;border-radius:2px 2px 0 0;border-bottom:1.8px solid #7b7fd0"></div>
<div class="a" style="left:643.3px;top:459.6px;width:0.8px;height:9px;background:#cfcfcf"></div>
<div class="t" style="left:645px;top:460.6px;font-size:8px;letter-spacing:-0.25px;color:#ababab;">輸入新訊息</div>
<svg class="a" style="left:620px;top:475px" width="180" height="25" viewBox="620 475 180 25">
<g stroke="#bdbdbd" stroke-width="0.8" fill="none" stroke-linecap="round" stroke-linejoin="round">
 <path d="M637.4 487 L639.3 482 L641.2 487 M638.1 485.2 H640.5"/>
 <path d="M641.5 490.5 L646.2 485.3 Q647 484.6 647.6 485.3 Q648.2 486 647.5 486.7 L642.8 491.8 L641.2 492.2Z"/>
 <path d="M681.6 485.6 L676.6 490.8 Q675.6 492 676.6 492.6 Q677.6 493.2 678.6 492 L684 486.2 Q685.4 484.6 684.2 483.4 Q683 482.4 681.6 483.8 L675.4 490.2"/>
 <circle cx="695.8" cy="486.2" r="4.6"/>
 <path d="M693.8 488 Q695.8 489.8 697.8 488"/>
 <rect x="709.2" y="482.4" width="9.4" height="8" rx="1.6"/>
 <path d="M727.2 482.4 H736.3 V487.6 L732.6 491.3 H727.2Z" />
 <path d="M732.6 491.3 Q732.8 488 736.3 487.6"/>
 <path d="M729.5 488.6 Q731.5 489.8 733.4 488.2"/>
 <path d="M775.8 482.2 L785 486.6 L775.8 491 L777.6 486.6Z M777.6 486.6 H785"/>
</g>
<g fill="#bdbdbd">
 <rect x="659.5" y="482.3" width="1.3" height="5.6" rx="0.6"/>
 <circle cx="660.15" cy="489.6" r="0.75"/>
 <circle cx="694.2" cy="485.2" r="0.55"/><circle cx="697.4" cy="485.2" r="0.55"/>
 <rect x="711" y="485" width="1.2" height="3" /><rect x="713.2" y="485" width="0.8" height="3"/><rect x="715" y="485" width="2.2" height="0.8"/><rect x="715" y="485" width="0.8" height="3"/><rect x="715" y="486.4" width="1.8" height="0.7"/>
 <circle cx="729.8" cy="485.5" r="0.6"/><circle cx="733.4" cy="485.5" r="0.6"/>
 <circle cx="746" cy="486.3" r="0.6"/><circle cx="749" cy="486.3" r="0.6"/><circle cx="752" cy="486.3" r="0.6"/>
</g>
</svg>
<svg class="a" style="left:480px;top:38px" width="320" height="30" viewBox="480 38 320 30">
<g stroke="#d6d6d6" stroke-width="1" fill="none" stroke-linecap="round" stroke-linejoin="round">
 <circle cx="501.7" cy="49.2" r="2.6"/>
 <path d="M497.6 54 Q497.6 52.6 499 52.6 H504.4 Q505.8 52.6 505.8 54 Q505.8 56.6 501.7 56.6 Q497.6 56.6 497.6 54Z"/>
 <circle cx="507.6" cy="49.6" r="1.8"/>
 <path d="M507 52.6 H508.6 Q510 52.6 510 54 Q510 56 507.6 56.2"/>
 <path d="M525.8 57.2 L526.5 54.6 Q525 51.2 527 48.9 Q529.6 46.2 533.2 47.3 Q536.2 48.6 535.6 52.3 Q535 56 531 56.8 Q528.6 57.1 526.9 56.2Z"/>
 <path d="M528.4 50.9 H532.4 M528.4 52.8 H530.8"/>
 <path d="M579 51.6 V49.4 Q579 48.2 580.2 48.2 H587.4 Q588.6 48.2 588.6 49.4 V55.8 Q588.6 57 587.4 57 H584.4"/>
 <rect x="579" y="52.2" width="4.8" height="4.8" rx="0.9"/>
 <circle cx="558.4" cy="54.4" r="3.4"/>
 <path d="M557.4 53.6 V55.6 M559.4 53 V55.6"/>
 <path d="M645.6 47.6 L657 57.6 M673.8 47.2 L683.6 57.6"/>
</g>
<g fill="#d6d6d6">
 <path d="M552.6 53 Q551.6 48.2 554.8 47.6 Q558 47.4 557.8 50.6 Q555 51 554.6 54Z"/>
 <circle cx="606.5" cy="52.6" r="1.2"/><circle cx="610.3" cy="52.6" r="1.2"/><circle cx="614.1" cy="52.6" r="1.2"/>
 <path d="M646.2 48.6 H653 Q654.2 48.6 654.2 49.8 V50.8 L657.2 49 V56.2 L654.2 54.4 V55.4 Q654.2 56.6 653 56.6 H646.2 Q645 56.6 645 55.4 V49.8 Q645 48.6 646.2 48.6Z" fill="#fff"/>
 <rect x="675.6" y="47" width="4.8" height="7.6" rx="2.4" fill="#fff"/>
</g>
<path d="M645.2 47 L657.4 58.2" stroke="#1f1f1f" stroke-width="1.8"/>
<path d="M645.4 47.2 L657 57.8" stroke="#fff" stroke-width="0.9"/>
<g stroke="#f2f2f2" stroke-width="0.9" fill="none">
 <path d="M674 52.2 Q674 56 678 56 Q682 56 682 52.2 M678 56 V58.2 M676.4 58.2 H679.6"/>
</g>
<path d="M672.6 46.6 L684 58.2" stroke="#1f1f1f" stroke-width="1.8"/>
<path d="M672.8 46.8 L683.8 58" stroke="#fff" stroke-width="0.9"/>
<rect x="698.6" y="48.4" width="11.2" height="8.6" rx="1.6" fill="#fafafa"/>
<path d="M704.2 55.2 V50.8 M702.3 52.6 L704.2 50.6 L706.1 52.6" stroke="#1f1f1f" stroke-width="1" fill="none"/>
<path d="M734 53.4 Q739 49.8 744 53.4 L743.6 55.4 L741 54.6 L741 53.6 Q739 53 737 53.6 L737 54.6 L734.4 55.4Z" fill="#fff"/>
<path d="M776.6 51.2 L779.6 53.8 L782.6 51.2" stroke="#f4e4e8" stroke-width="1" fill="none"/>
</svg>
</body></html>
